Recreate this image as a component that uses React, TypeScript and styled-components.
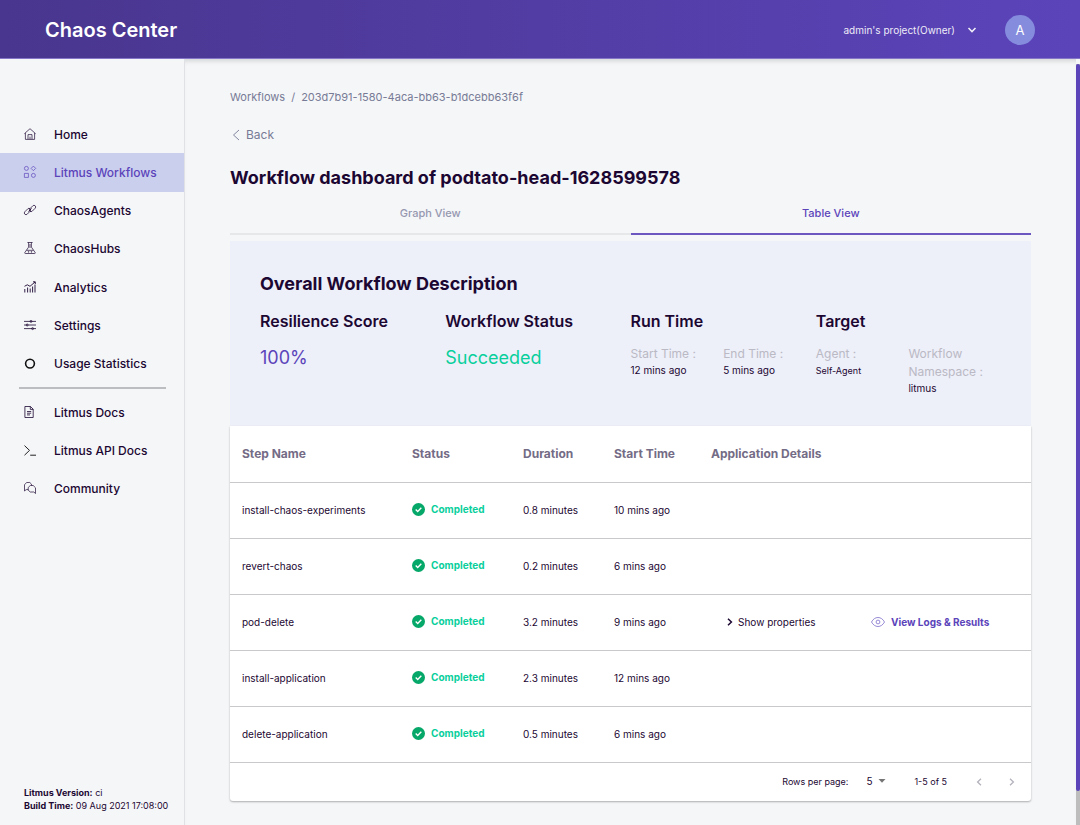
import React from 'react';
import styled, { createGlobalStyle } from 'styled-components';

const color = {
  primary: '#5b44ba',
  ink: '#1c0732',
  page: '#f5f6f8',
  slate: '#777b96',
  faint: '#bab9c4',
  line: '#c9c9cb',
  success: '#09cf9c',
};

const GlobalStyle = createGlobalStyle`
  *, *::before, *::after { box-sizing: border-box; }
  body {
    margin: 0;
    background: ${color.page};
    color: ${color.ink};
    font-family: Inter, 'Liberation Sans', sans-serif;
    font-size: 11px;
    line-height: 16px;
  }
  button, select { font: inherit; color: inherit; }
  h1, h2, h3, p, dl, dd, ul, ol { margin: 0; padding: 0; }
`;

const Page = styled.div`
  display: flex;
  flex-direction: column;
  min-height: 100vh;
`;

const Header = styled.header`
  display: flex;
  align-items: center;
  justify-content: space-between;
  height: 59px;
  padding: 2px 45px 0;
  color: #fff;
  background: linear-gradient(90deg, #49368e 0%, ${color.primary} 100%);
  border-bottom: 1px solid #8576c8;
`;

const Brand = styled.div`
  font-size: 20px;
  line-height: 28px;
  font-weight: 600;
`;

const Account = styled.div`
  display: flex;
  align-items: center;
  gap: 28px;
`;

const ProjectButton = styled.button`
  display: flex;
  align-items: center;
  gap: 12px;
  padding: 0;
  border: 0;
  background: none;
  font-size: 10px;
  opacity: 0.9;
`;

const Avatar = styled.div`
  display: grid;
  place-items: center;
  width: 30px;
  height: 30px;
  border-radius: 50%;
  background: #858cdd;
  font-size: 13px;
`;

const Body = styled.div`
  display: flex;
  flex: 1;
`;

const Sidebar = styled.aside`
  display: flex;
  flex-direction: column;
  flex: none;
  width: 185px;
  padding-top: 56px;
  border-right: 1px solid #e0e1e4;
  background: ${color.page};
`;

const NavGroup = styled.ul<{ $height: number }>`
  display: grid;
  grid-auto-rows: 1fr;
  min-height: ${(p) => p.$height}px;
  list-style: none;
`;

const NavLink = styled.a<{ $active?: boolean }>`
  display: flex;
  align-items: center;
  gap: 18px;
  height: 100%;
  padding: 1px 0 0 24px;
  font-size: 12px;
  font-weight: 500;
  text-decoration: none;
  color: ${(p) => (p.$active ? color.primary : color.ink)};
  background: ${(p) => (p.$active ? '#cbcfee' : 'none')};
`;

const NavIcon = styled.svg`
  flex: none;
  width: 12px;
  height: 12px;
  margin-bottom: 2px;
  fill: none;
  stroke: currentColor;
  stroke-width: 0.7;
  overflow: visible;
`;

const NavDivider = styled.hr`
  width: 147px;
  height: 2px;
  margin: 4px 0 4px 19px;
  border: 0;
  background: #bcbdc1;
`;

const Version = styled.div`
  margin-top: auto;
  padding: 0 0 13px 24px;
  font-size: 9px;
  line-height: 13px;
`;

const Main = styled.main`
  flex: 1;
  min-width: 0;
  padding: 30px 45px 23px;
  box-shadow: inset 0 5px 5px -3px rgba(0, 0, 0, 0.14);
`;

const Breadcrumbs = styled.nav`
  display: flex;
  gap: 6px;
  color: ${color.slate};

  a { color: inherit; text-decoration: none; }
`;

const BackButton = styled.button`
  display: flex;
  align-items: center;
  gap: 6px;
  margin-top: 22px;
  padding: 0 0 0 2px;
  border: 0;
  background: none;
  color: ${color.slate};
  font-size: 12px;
`;

const Title = styled.h1`
  margin-top: 23px;
  font-size: 18px;
  line-height: 24px;
  font-weight: 700;
`;

const Tabs = styled.div`
  display: grid;
  grid-template-columns: 1fr 1fr;
  margin-top: 5px;
`;

const Tab = styled.button<{ $active?: boolean }>`
  height: 40px;
  padding: 0 0 2px;
  border: 0;
  border-bottom: 2px solid ${(p) => (p.$active ? '#6c57c1' : '#e6e7e9')};
  background: none;
  color: ${(p) => (p.$active ? color.primary : '#9698b0')};
  font-weight: 500;
`;

const Summary = styled.section`
  margin-top: 6px;
  padding: 31px 30px 30px;
  background: #edeff9;
`;

const SummaryTitle = styled.h2`
  font-size: 18px;
  line-height: 24px;
  font-weight: 700;
`;

const SummaryGrid = styled.div`
  display: grid;
  grid-template-columns: repeat(4, 1fr);
  margin-top: 14px;
`;

const SummaryHeading = styled.h3`
  font-size: 16px;
  line-height: 22px;
  font-weight: 600;
`;

const BigValue = styled.p<{ $color: string }>`
  margin-top: 14px;
  font-size: 18px;
  line-height: 24px;
  color: ${(p) => p.$color};
`;

const Facts = styled.dl`
  display: grid;
  grid-template-columns: 1fr 1fr;
  margin-top: 13px;
`;

const FactLabel = styled.dt`
  padding-right: 8px;
  font-size: 12px;
  line-height: 18px;
  color: ${color.faint};
`;

const FactValue = styled.dd<{ $small?: boolean }>`
  font-size: ${(p) => (p.$small ? 9 : 10)}px;
  line-height: 15px;
`;

const TableCard = styled.section`
  background: #fff;
  border-radius: 0 0 3px 3px;
  box-shadow: 0 1px 2px rgba(0, 0, 0, 0.3);
`;

const StepTable = styled.table`
  width: 100%;
  border-collapse: collapse;
  table-layout: fixed;
  font-size: 10px;
`;

const Column = styled.col<{ $width?: number }>`
  width: ${(p) => (p.$width ? `${p.$width}px` : 'auto')};
`;

const HeadCell = styled.th`
  height: 56px;
  padding: 0 12px;
  border-bottom: 1px solid ${color.line};
  text-align: left;
  font-size: 12px;
  font-weight: 700;
  color: #746c86;
`;

const Cell = styled.td`
  height: 56px;
  padding: 0 12px;
  border-bottom: 1px solid ${color.line};
  white-space: nowrap;
`;

const Status = styled.div`
  display: flex;
  align-items: center;
  gap: 6px;
  padding-bottom: 2px;
  color: ${color.success};
  font-weight: 700;
`;

const RowButton = styled.button<{ $accent?: boolean }>`
  display: flex;
  align-items: center;
  gap: ${(p) => (p.$accent ? 6 : 5)}px;
  padding: 0 0 0 ${(p) => (p.$accent ? 7 : 16)}px;
  border: 0;
  background: none;
  color: ${(p) => (p.$accent ? color.primary : color.ink)};
  font-weight: ${(p) => (p.$accent ? 700 : 400)};
`;

const Pagination = styled.div`
  display: flex;
  align-items: center;
  justify-content: flex-end;
  height: 38px;
  padding-right: 13px;
  font-size: 9px;
`;

const RowsLabel = styled.label`
  display: flex;
  align-items: center;
  gap: 18px;
`;

const SelectWrap = styled.span`
  display: flex;
  align-items: center;
  padding-bottom: 2px;
`;

const RowsSelect = styled.select`
  width: 12px;
  padding: 0;
  border: 0;
  appearance: none;
  background: none;
  font-size: 10px;
`;

const RangeText = styled.span`
  margin: 0 26px 0 28px;
`;

const PageButton = styled.button`
  display: grid;
  place-items: center;
  width: 12px;
  height: 18px;
  padding: 0;
  border: 0;
  background: none;
  color: #b5b2bc;

  & + & { margin-left: 21px; }
`;

const ScrollRail = styled.div`
  display: flex;
  flex-direction: column;
  flex: none;
  width: 4px;
  margin-top: 5px;
  background: #bdbdbd;
`;

const ScrollThumb = styled.div`
  height: calc(100% - 34px);
  border-radius: 2px;
  background: ${color.primary};
`;

const icons: Record<string, React.ReactNode> = {
  home: (
    <path d="M1.4 5v6.4h9.2V5M.4 5.7 6 .7l5.6 5M4 11.2V6.6h4v4.6M6 8.6v2.6" />
  ),
  workflows: (
    <>
      <circle cx="2.4" cy="2.4" r="2" />
      <path d="M9.4.1l2.3 2.3-2.3 2.3-2.3-2.3zM.4 7.4h4v4h-4z" />
      <circle cx="9.4" cy="9.4" r="2" />
    </>
  ),
  agents: (
    <>
      <rect x="-.3" y="5.8" width="7.6" height="3.4" rx="1.7" transform="rotate(-45 3.5 7.5)" />
      <rect x="4.7" y="2.8" width="7.6" height="3.4" rx="1.7" transform="rotate(-45 8.5 4.5)" />
      <path d="M4.3 7.7l3.4-3.4" />
    </>
  ),
  hubs: (
    <>
      <path d="M3.4.5h5.2M4.6.5v4.6L.8 10.6c-.2.5 0 .9.5.9h9.4c.5 0 .7-.4.5-.9L7.4 5.1V.5M2.6 8.3h6.8M6 2v4" />
      <circle cx="4.6" cy="9.9" r=".4" />
      <circle cx="7.4" cy="9.9" r=".4" />
    </>
  ),
  analytics: (
    <path
      d="M.8 11.5V8M3.6 11.5V6.5M6.2 11.5V7.5M8.6 11.5V5.5M11 11.5V3.5M.5 5.3l2.8-1.5L6 5.3l5-4.3M9 .8h2.3V3"
      strokeWidth=".9"
    />
  ),
  settings: (
    <>
      <path d="M0 2.4h12M0 6h12M0 9.6h12" strokeWidth=".8" />
      <circle cx="7" cy="2.4" r="1" />
      <circle cx="3.2" cy="6" r="1" />
      <circle cx="8.6" cy="9.6" r="1" />
    </>
  ),
  usage: <circle cx="6" cy="6.6" r="4.4" stroke="#111" strokeWidth="1.6" />,
  docs: (
    <path d="M.9.5h5.6l2.7 2.7v8.3H.9zM6.3.5v2.9h2.9M3 5.5h4.2M3 7.2h4.2M3 8.9h3" strokeWidth=".8" />
  ),
  api: <path d="M.5 1.6L5.500 6.400l-5 4.800M6.200 11.200H12" stroke="#222" strokeWidth="1" />,
  community: (
    <>
      <path d="M4.2 7.6H2.2L.5 9V2.800L2.600.5h3.200l1.700 1.700v1.200" />
      <path d="M6.300 3.500h2.900l2.300 2.300v5.700L9.800 10H6.300L4.200 8.200V5.500z" />
    </>
  ),
};

type NavEntry = { label: string; icon: string; active?: boolean };

const mainNav: NavEntry[] = [
  { label: 'Home', icon: 'home' },
  { label: 'Litmus Workflows', icon: 'workflows', active: true },
  { label: 'ChaosAgents', icon: 'agents' },
  { label: 'ChaosHubs', icon: 'hubs' },
  { label: 'Analytics', icon: 'analytics' },
  { label: 'Settings', icon: 'settings' },
  { label: 'Usage Statistics', icon: 'usage' },
];

const helpNav: NavEntry[] = [
  { label: 'Litmus Docs', icon: 'docs' },
  { label: 'Litmus API Docs', icon: 'api' },
  { label: 'Community', icon: 'community' },
];

const steps = [
  { name: 'install-chaos-experiments', duration: '0.8 minutes', start: '10 mins ago' },
  { name: 'revert-chaos', duration: '0.2 minutes', start: '6 mins ago' },
  { name: 'pod-delete', duration: '3.2 minutes', start: '9 mins ago', experiment: true },
  { name: 'install-application', duration: '2.3 minutes', start: '12 mins ago' },
  { name: 'delete-application', duration: '0.5 minutes', start: '6 mins ago' },
];

function NavList({ items, height }: { items: NavEntry[]; height: number }) {
  return (
    <NavGroup $height={height}>
      {items.map((item) => (
        <li key={item.label}>
          <NavLink href="#" $active={item.active}>
            <NavIcon viewBox="0 0 12 12" aria-hidden>{icons[item.icon]}</NavIcon>
            {item.label}
          </NavLink>
        </li>
      ))}
    </NavGroup>
  );
}

function Chevron({ d, width, height, stroke = 1.3 }: { d: string; width: number; height: number; stroke?: number }) {
  return (
    <svg width={width} height={height} viewBox={`0 0 ${width} ${height}`} fill="none" stroke="currentColor" strokeWidth={stroke} aria-hidden>
      <path d={d} />
    </svg>
  );
}

function CheckBadge() {
  return (
    <svg width="13" height="13" viewBox="0 0 13 13" aria-hidden>
      <circle cx="6.5" cy="6.5" r="6.5" fill="#06a869" />
      <path d="M3.7 6.6l2 1.9 3.6-3.7" fill="none" stroke="#fff" strokeWidth="1.4" />
    </svg>
  );
}

function EyeIcon() {
  return (
    <svg width="14" height="10" viewBox="0 0 14 10" fill="none" stroke="#8d7dd0" strokeWidth=".9" aria-hidden>
      <path d="M.5 5C2 2.2 4.3.5 7 .5S12 2.2 13.5 5C12 7.8 9.7 9.5 7 9.5S2 7.8.5 5z" />
      <circle cx="7" cy="5" r="1.9" />
    </svg>
  );
}

export default function App() {
  return (
    <Page>
      <GlobalStyle />
      <Header>
        <Brand>Chaos Center</Brand>
        <Account>
          <ProjectButton type="button">
            admin's project(Owner)
            <Chevron width={10} height={6} d="M1.5 1L5 4.5 8.5 1" stroke={1.6} />
          </ProjectButton>
          <Avatar>A</Avatar>
        </Account>
      </Header>
      <Body>
        <Sidebar>
          <nav>
            <NavList items={mainNav} height={268} />
            <NavDivider />
            <NavList items={helpNav} height={115} />
          </nav>
          <Version>
            <p><b>Litmus Version:</b> ci</p>
            <p><b>Build Time:</b> 09 Aug 2021 17:08:00</p>
          </Version>
        </Sidebar>
        <Main>
          <Breadcrumbs aria-label="Breadcrumb">
            <a href="#">Workflows</a>
            <span>/</span>
            <a href="#">203d7b91-1580-4aca-bb63-b1dcebb63f6f</a>
          </Breadcrumbs>
          <BackButton type="button">
            <Chevron width={8} height={12} d="M7 1L1.5 6 7 11" stroke={0.9} />
            Back
          </BackButton>
          <Title>Workflow dashboard of podtato-head-1628599578</Title>
          <Tabs role="tablist">
            <Tab type="button" role="tab" aria-selected="false">Graph View</Tab>
            <Tab type="button" role="tab" aria-selected="true" $active>Table View</Tab>
          </Tabs>
          <Summary>
            <SummaryTitle>Overall Workflow Description</SummaryTitle>
            <SummaryGrid>
              <div>
                <SummaryHeading>Resilience Score</SummaryHeading>
                <BigValue $color={color.primary}>100%</BigValue>
              </div>
              <div>
                <SummaryHeading>Workflow Status</SummaryHeading>
                <BigValue $color={color.success}>Succeeded</BigValue>
              </div>
              <div>
                <SummaryHeading>Run Time</SummaryHeading>
                <Facts>
                  <div>
                    <FactLabel>Start Time :</FactLabel>
                    <FactValue>12 mins ago</FactValue>
                  </div>
                  <div>
                    <FactLabel>End Time :</FactLabel>
                    <FactValue>5 mins ago</FactValue>
                  </div>
                </Facts>
              </div>
              <div>
                <SummaryHeading>Target</SummaryHeading>
                <Facts>
                  <div>
                    <FactLabel>Agent :</FactLabel>
                    <FactValue $small>Self-Agent</FactValue>
                  </div>
                  <div>
                    <FactLabel>Workflow Namespace :</FactLabel>
                    <FactValue>litmus</FactValue>
                  </div>
                </Facts>
              </div>
            </SummaryGrid>
          </Summary>
          <TableCard>
            <StepTable>
              <colgroup>
                <Column $width={170} />
                <Column $width={111} />
                <Column $width={91} />
                <Column $width={97} />
                <Column $width={153} />
                <Column />
              </colgroup>
              <thead>
                <tr>
                  <HeadCell>Step Name</HeadCell>
                  <HeadCell>Status</HeadCell>
                  <HeadCell>Duration</HeadCell>
                  <HeadCell>Start Time</HeadCell>
                  <HeadCell>Application Details</HeadCell>
                  <HeadCell aria-label="Actions" />
                </tr>
              </thead>
              <tbody>
                {steps.map((step) => (
                  <tr key={step.name}>
                    <Cell>{step.name}</Cell>
                    <Cell>
                      <Status><CheckBadge />Completed</Status>
                    </Cell>
                    <Cell>{step.duration}</Cell>
                    <Cell>{step.start}</Cell>
                    <Cell>
                      {step.experiment && (
                        <RowButton type="button">
                          <Chevron width={6} height={8} d="M1 .8L4.4 4 1 7.2" stroke={1.5} />
                          Show properties
                        </RowButton>
                      )}
                    </Cell>
                    <Cell>
                      {step.experiment && (
                        <RowButton type="button" $accent>
                          <EyeIcon />
                          View Logs &amp; Results
                        </RowButton>
                      )}
                    </Cell>
                  </tr>
                ))}
              </tbody>
            </StepTable>
            <Pagination>
              <RowsLabel>
                Rows per page:
                <SelectWrap>
                  <RowsSelect defaultValue="5">
                    <option value="5">5</option>
                    <option value="10">10</option>
                    <option value="25">25</option>
                  </RowsSelect>
                  <svg width="8" height="4" viewBox="0 0 8 4" fill="#757575" aria-hidden>
                    <path d="M.5 0h7L4 3.7z" />
                  </svg>
                </SelectWrap>
              </RowsLabel>
              <RangeText>1-5 of 5</RangeText>
              <PageButton type="button" aria-label="Previous page" disabled>
                <Chevron width={6} height={8} d="M5 .8L1.6 4 5 7.2" />
              </PageButton>
              <PageButton type="button" aria-label="Next page" disabled>
                <Chevron width={6} height={8} d="M1 .8L4.4 4 1 7.2" />
              </PageButton>
            </Pagination>
          </TableCard>
        </Main>
        <ScrollRail aria-hidden>
          <ScrollThumb />
        </ScrollRail>
      </Body>
    </Page>
  );
}
